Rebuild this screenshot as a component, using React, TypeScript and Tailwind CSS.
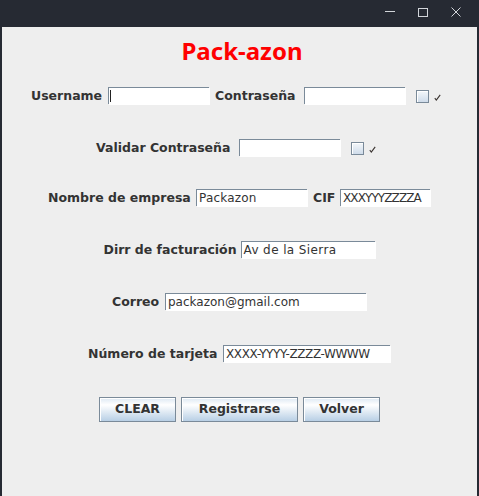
import React from "react";

const LABEL = "font-['DejaVu_Sans',sans-serif] font-bold text-[12.5px] text-[#333333] whitespace-nowrap leading-none";

function Label({ w, children }: { w: number; children: React.ReactNode }) {
  return (
    <div className={LABEL + " shrink-0 flex justify-start"} style={{ width: w }}>
      {children}
    </div>
  );
}

function Field({ w, value, focused, track }: { w: number; value?: string; focused?: boolean; track?: string }) {
  return (
    <div className="shrink-0 h-[18px] relative" style={{ width: w }}>
      <div className="absolute left-0 top-0 right-[1px] bottom-[1px] border border-[#7a8a99]" />
      <div className="absolute left-[1px] top-[1px] right-0 bottom-0 border-r border-b border-white" />
      <div
        className={
          "absolute inset-[1px] bg-white flex items-center pl-[2px] overflow-hidden font-['DejaVu_Sans',sans-serif] text-[12px] text-[#333333] whitespace-nowrap leading-none " +
          (track ?? "")
        }
      >
        {value}
        {focused && <div className="absolute left-[1px] top-[2px] bottom-[2px] w-[1px] bg-[#222222]" />}
      </div>
    </div>
  );
}

function Check() {
  return (
    <div className="shrink-0 w-[37px] h-[18px] flex items-center pl-[5px] gap-[5px]">
      <div className="w-[13px] h-[13px] border border-[#7a8a99] bg-[linear-gradient(to_bottom,#f4f7fa,#cfdcea)] shadow-[inset_1px_1px_0_#ffffff]" />
      <svg width="7" height="7" viewBox="0 0 7 7" className="mt-[2px]">
        <path d="M0.8 4.2 L2.3 6 L6.2 0.8" fill="none" stroke="#3a3330" strokeWidth="1.1" />
      </svg>
    </div>
  );
}

function Button({ w, children }: { w: number; children: React.ReactNode }) {
  return (
    <div
      className="shrink-0 h-[25px] border border-[#7a8a99] shadow-[inset_1px_1px_0_#ffffff] bg-[linear-gradient(to_bottom,#dde8f3_0%,#ffffff_30%,#b8cfe5_100%)] flex items-center justify-center font-['DejaVu_Sans',sans-serif] font-bold text-[12.5px] text-[#333333] leading-none"
      style={{ width: w }}
    >
      {children}
    </div>
  );
}

export default function App() {
  return (
    <div className="w-[479px] h-[496px] bg-[#262a33] flex flex-col overflow-hidden">
      <div className="h-[27px] shrink-0 flex items-start justify-end pt-[7px] pr-[18px] gap-[23px]">
        <svg width="10" height="10" viewBox="0 0 10 10">
          <line x1="0" y1="4.5" x2="10" y2="4.5" stroke="#d2d5da" strokeWidth="1" />
        </svg>
        <svg width="10" height="10" viewBox="0 0 10 10">
          <rect x="0.5" y="1.5" width="9" height="8" fill="none" stroke="#d2d5da" strokeWidth="1" />
        </svg>
        <svg width="10" height="10" viewBox="0 0 10 10">
          <line x1="0.5" y1="0.5" x2="9.5" y2="9.5" stroke="#d2d5da" strokeWidth="1" />
          <line x1="9.5" y1="0.5" x2="0.5" y2="9.5" stroke="#d2d5da" strokeWidth="1" />
        </svg>
      </div>
      <div className="flex-1 mx-[2px] bg-[#eeeeee] flex flex-col">
        <div className="h-[46px] flex items-center justify-center pl-[5px] pt-[1px]">
          <span className="font-['Noto_Sans',sans-serif] font-bold text-[24px] text-[#ff0000] leading-none">Pack-azon</span>
        </div>

        <div className="mt-[14px] h-[18px] flex items-center justify-center gap-[5px]">
          <Label w={72}>Username</Label>
          <Field w={102} focused />
          <Label w={84}>Contraseña</Label>
          <Field w={102} />
          <Check />
        </div>

        <div className="mt-[34px] h-[18px] flex items-center justify-center gap-[5px]">
          <Label w={138}>Validar Contraseña</Label>
          <Field w={102} />
          <Check />
        </div>

        <div className="mt-[32px] h-[18px] flex items-center justify-center gap-[5px]">
          <Label w={143}>Nombre de empresa</Label>
          <Field w={112} value="Packazon" track="tracking-[0.2px]" />
          <Label w={22}>CIF</Label>
          <Field w={91} value="XXXYYYZZZZA" track="tracking-[-0.9px]" />
        </div>

        <div className="mt-[34px] h-[18px] flex items-center justify-center gap-[5px]">
          <Label w={132}>Dirr de facturación</Label>
          <Field w={135} value="Av de la Sierra" track="tracking-[0.4px]" />
        </div>

        <div className="mt-[34px] h-[18px] flex items-center justify-center gap-[5px]">
          <Label w={48}>Correo</Label>
          <Field w={202} value="packazon@gmail.com" />
        </div>

        <div className="mt-[34px] h-[18px] flex items-center justify-center gap-[5px]">
          <Label w={130}>Número de tarjeta</Label>
          <Field w={168} value="XXXX-YYYY-ZZZZ-WWWW" track="tracking-[-0.4px]" />
        </div>

        <div className="mt-[34px] h-[25px] flex items-center justify-center gap-[5px]">
          <Button w={77}>CLEAR</Button>
          <Button w={117}>Registrarse</Button>
          <Button w={77}>Volver</Button>
        </div>
      </div>
    </div>
  );
}
